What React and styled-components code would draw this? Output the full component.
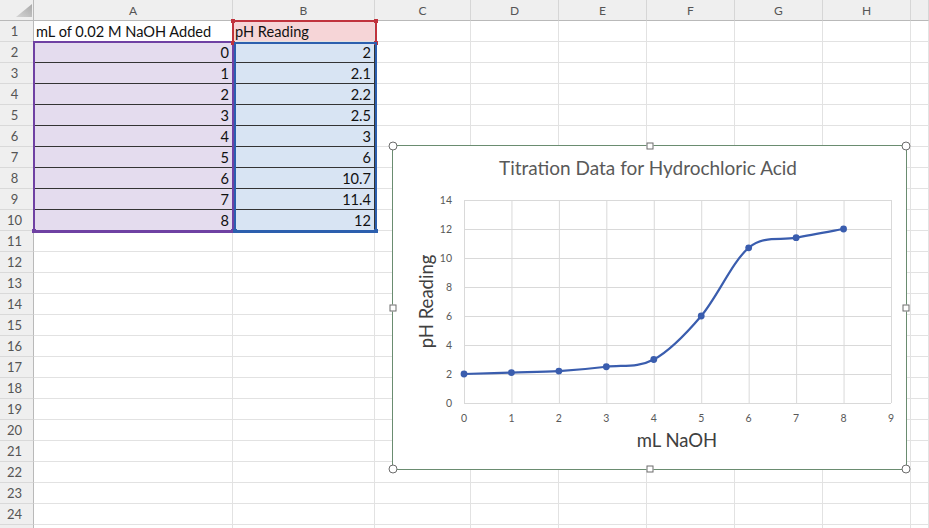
import React from "react";
import styled, { createGlobalStyle } from "styled-components";

const Global = createGlobalStyle`
  html, body { margin: 0; padding: 0; background: #fff; }
  body { font-family: Lato, "Liberation Sans", sans-serif; overflow: hidden; }
`;

const Page = styled.div`
  position: relative;
  width: 929px;
  height: 528px;
  overflow: hidden;
  background: #fff;
`;

const Grid = styled.div`
  display: grid;
  grid-template-columns: 34px 199px 142px 96px repeat(5, 88px) 1fr;
  grid-template-rows: repeat(26, 21px);
`;

const Slot = styled.div`
  grid-row: ${(p) => p.$row};
  grid-column: ${(p) => p.$col};
  box-sizing: border-box;
  min-width: 0;
`;

const Corner = styled(Slot)`
  background: #efefef;
  border-right: 1px solid #b9b9b9;
  border-bottom: 1px solid #b9b9b9;
  display: flex;
  justify-content: flex-end;
  align-items: flex-end;
  padding: 0 1px 3px 0;
`;

const ColHead = styled(Slot)`
  background: #efefef;
  border-right: 1px solid #d6d6d6;
  border-bottom: 1px solid #b9b9b9;
  display: flex;
  align-items: center;
  justify-content: center;
  font-size: 12px;
  color: #555;
`;

const RowHead = styled(Slot)`
  background: #efefef;
  border-right: 1px solid #b9b9b9;
  border-bottom: 1px solid #d9d9d9;
  display: flex;
  align-items: center;
  justify-content: center;
  padding-right: 4px;
  font-size: 13px;
  color: #555;
`;

const Cell = styled(Slot)`
  background: ${(p) => p.$fill || "#fff"};
  border-right: 1px solid ${(p) => (p.$dark ? "#333" : "#e2e2e2")};
  border-bottom: 1px solid ${(p) => (p.$dark ? "#333" : "#e2e2e2")};
  display: flex;
  align-items: center;
  justify-content: ${(p) => (p.$right ? "flex-end" : "flex-start")};
  padding: 1px 3px 0 2px;
  font-size: 14.6px;
  color: #111;
  white-space: nowrap;
  overflow: visible;
`;

const Range = styled(Slot)`
  position: relative;
  z-index: 2;
  margin: ${(p) => p.$m};
  border: 2px solid ${(p) => p.$c};
  border-bottom-width: ${(p) => p.$bb || 2}px;
  pointer-events: none;
`;

const Knob = styled.span`
  position: absolute;
  width: 4px;
  height: 4px;
  background: ${(p) => p.$c};
  ${(p) => (p.$top ? "top: -3px;" : "bottom: -3px;")}
  ${(p) => (p.$left ? "left: -3px;" : "right: -3px;")}
`;

const ChartBox = styled.div`
  position: absolute;
  left: 392px;
  top: 145px;
  width: 515px;
  height: 325px;
  box-sizing: border-box;
  background: #fff;
  border: 1.5px solid #6a8c70;
  z-index: 3;
`;

const Handle = styled.span`
  position: absolute;
  box-sizing: border-box;
  width: ${(p) => (p.$round ? 9 : 7)}px;
  height: ${(p) => (p.$round ? 9 : 7)}px;
  border: 1px solid #6c6c6c;
  background: #fff;
  border-radius: ${(p) => (p.$round ? "50%" : "0")};
  left: ${(p) => p.$x};
  top: ${(p) => p.$y};
  transform: translate(-50%, -50%);
`;

const ChartSvg = styled.svg`
  display: block;
  margin: -1.5px;
  font-family: Lato, "Liberation Sans", sans-serif;
`;

const cols = ["A", "B", "C", "D", "E", "F", "G", "H", ""];
const xs = [0, 1, 2, 3, 4, 5, 6, 7, 8];
const ys = [2, 2.1, 2.2, 2.5, 3, 6, 10.7, 11.4, 12];

function Sheet() {
  const cells = [];
  cells.push(
    <Corner key="corner" $row={1} $col={1}>
      <svg width="16" height="13" viewBox="0 0 16 13">
        <defs>
          <linearGradient id="tri" x1="0" y1="1" x2="1" y2="0">
            <stop offset="0" stopColor="#d4d4d4" />
            <stop offset="1" stopColor="#a9a9a9" />
          </linearGradient>
        </defs>
        <polygon points="16,0 16,13 0,13" fill="url(#tri)" />
      </svg>
    </Corner>
  );
  cols.forEach((c, i) =>
    cells.push(
      <ColHead key={"h" + i} $row={1} $col={i + 2}>
        {c}
      </ColHead>
    )
  );
  for (let r = 1; r <= 25; r++) {
    cells.push(
      <RowHead key={"r" + r} $row={r + 1} $col={1}>
        {r <= 24 ? r : ""}
      </RowHead>
    );
    cols.forEach((c, i) => {
      let content = null;
      let fill;
      let dark = false;
      let right = false;
      if (r === 1 && c === "A") content = "mL of 0.02 M NaOH Added";
      if (r === 1 && c === "B") {
        content = "pH Reading";
        fill = "#f6d5d7";
      }
      if (r >= 2 && r <= 10 && c === "A") {
        content = xs[r - 2];
        fill = "#e4dcee";
        dark = true;
        right = true;
      }
      if (r >= 2 && r <= 10 && c === "B") {
        content = ys[r - 2];
        fill = "#d8e4f3";
        dark = true;
        right = true;
      }
      cells.push(
        <Cell key={r + "-" + i} $row={r + 1} $col={i + 2} $fill={fill} $dark={dark} $right={right}>
          {content}
        </Cell>
      );
    });
  }
  return (
    <Grid>
      {cells}
      <Range $row="3 / 12" $col="2 / 3" $m="-1px -1px -2px -1px" $c="#6f41a3" $bb={3}>
        <Knob $c="#6f41a3" $left />
        <Knob $c="#6f41a3" />
      </Range>
      <Range $row="2 / 3" $col="3 / 4" $m="-1px -2px -2px -1px" $c="#c0333d">
        <Knob $c="#c0333d" $top $left />
        <Knob $c="#c0333d" $top />
        <Knob $c="#c0333d" $left />
        <Knob $c="#c0333d" />
      </Range>
      <Range $row="3 / 12" $col="3 / 4" $m="0 -2px -2px 1px" $c="#2c5fae" $bb={3}>
        <Knob $c="#2c5fae" $left />
        <Knob $c="#2c5fae" />
      </Range>
    </Grid>
  );
}

function Chart() {
  const X0 = 72,
    X9 = 499,
    Y0 = 258,
    Y14 = 55;
  const ux = (X9 - X0) / 9;
  const uy = (Y0 - Y14) / 14;
  const px = (v) => X0 + v * ux;
  const py = (v) => Y0 - v * uy;
  const P = xs.map((x, i) => [px(x), py(ys[i])]);
  let d = `M${P[0][0]},${P[0][1]}`;
  for (let i = 0; i < P.length - 1; i++) {
    const p0 = P[Math.max(i - 1, 0)];
    const p1 = P[i];
    const p2 = P[i + 1];
    const p3 = P[Math.min(i + 2, P.length - 1)];
    const c1 = [p1[0] + (p2[0] - p0[0]) / 6, p1[1] + (p2[1] - p0[1]) / 6];
    const c2 = [p2[0] - (p3[0] - p1[0]) / 6, p2[1] - (p3[1] - p1[1]) / 6];
    d += ` C${c1[0]},${c1[1]} ${c2[0]},${c2[1]} ${p2[0]},${p2[1]}`;
  }
  const yt = [0, 2, 4, 6, 8, 10, 12, 14];
  const xt = [0, 1, 2, 3, 4, 5, 6, 7, 8, 9];
  return (
    <ChartBox>
      <ChartSvg width="515" height="325" viewBox="0 0 515 325">
        <text x="256" y="30" textAnchor="middle" fontSize="19" fill="#595959">
          Titration Data for Hydrochloric Acid
        </text>
        {yt.map((v) => (
          <line key={"gy" + v} x1={X0} x2={X9} y1={py(v) + 0.5} y2={py(v) + 0.5} stroke="#d9d9d9" strokeWidth="1" />
        ))}
        {xt.map((v) => (
          <line key={"gx" + v} x1={px(v) + 0.5} x2={px(v) + 0.5} y1={Y14} y2={Y0} stroke="#d9d9d9" strokeWidth="1" />
        ))}
        {yt.map((v) => (
          <text key={"ty" + v} x="60" y={py(v) + 3.5} textAnchor="end" fontSize="10.5" fill="#595959">
            {v}
          </text>
        ))}
        {xt.map((v) => (
          <text key={"tx" + v} x={px(v)} y="277" textAnchor="middle" fontSize="10.5" fill="#595959">
            {v}
          </text>
        ))}
        <text x="285" y="302" textAnchor="middle" fontSize="18.5" fill="#404040">
          mL NaOH
        </text>
        <text
          x="0"
          y="0"
          transform={`translate(41 ${(Y0 + Y14) / 2}) rotate(-90)`}
          textAnchor="middle"
          fontSize="18.5"
          fill="#404040"
        >
          pH Reading
        </text>
        <path d={d} fill="none" stroke="#3a5dae" strokeWidth="2.2" />
        {P.map((p, i) => (
          <circle key={"m" + i} cx={p[0]} cy={p[1]} r="3.4" fill="#3a5dae" />
        ))}
      </ChartSvg>
      <Handle $round $x="0" $y="0" />
      <Handle $round $x="100%" $y="0" />
      <Handle $round $x="0" $y="100%" />
      <Handle $round $x="100%" $y="100%" />
      <Handle $x="50%" $y="0" />
      <Handle $x="50%" $y="100%" />
      <Handle $x="0" $y="50%" />
      <Handle $x="100%" $y="50%" />
    </ChartBox>
  );
}

export default function App() {
  return (
    <Page>
      <Global />
      <Sheet />
      <Chart />
    </Page>
  );
}
